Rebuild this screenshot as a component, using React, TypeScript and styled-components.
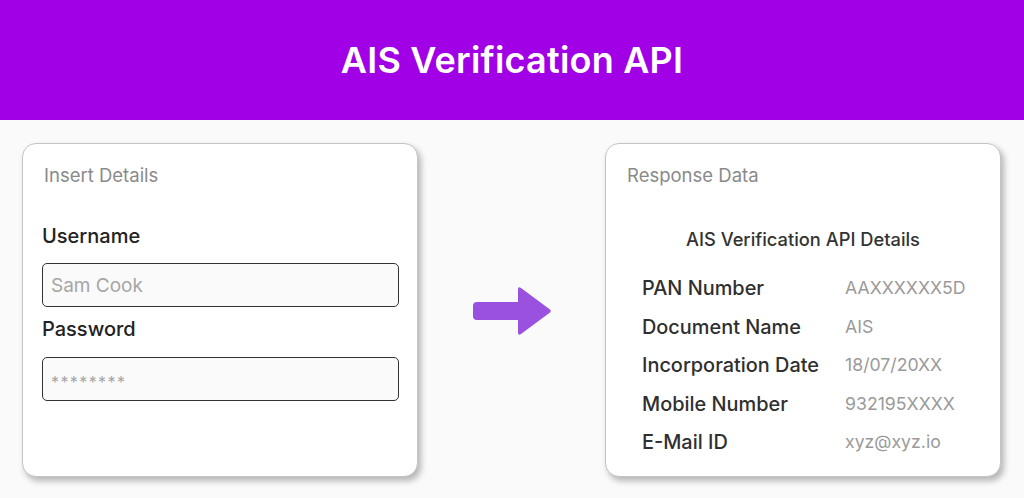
import React from "react";
import styled, { createGlobalStyle } from "styled-components";

const GlobalStyle = createGlobalStyle`
  html, body {
    margin: 0;
    padding: 0;
    background: #fafafa;
    font-family: "Inter", "Noto Sans", sans-serif;
  }
`;

const Page = styled.div`
  width: 1024px;
  height: 498px;
  display: flex;
  flex-direction: column;
  background: #fafafa;
  overflow: hidden;
`;

const Banner = styled.header`
  height: 120px;
  flex-shrink: 0;
  background: #a100e6;
  display: flex;
  align-items: center;
  justify-content: center;
`;

const BannerTitle = styled.h1`
  margin: 0;
  color: #ffffff;
  font-size: 36px;
  line-height: 44px;
  font-weight: 600;
  letter-spacing: 0.2px;
`;

const Content = styled.main`
  display: flex;
  align-items: center;
  justify-content: space-between;
  padding: 23px 23px 0 22px;
`;

const Card = styled.section`
  box-sizing: border-box;
  width: 396px;
  height: 334px;
  background: #ffffff;
  border: 1px solid #c4c4c4;
  border-radius: 14px;
  box-shadow: 3px 4px 6px rgba(0, 0, 0, 0.28);
  display: flex;
  flex-direction: column;
`;

const LeftCard = styled(Card)`
  padding: 0 18px 0 19px;
`;

const RightCard = styled(Card)`
  padding: 0 20px;
`;

const CardTitle = styled.h2<{ $indent: number }>`
  margin: 19px 0 0 ${(p) => p.$indent}px;
  font-size: 18.5px;
  line-height: 24px;
  font-weight: 400;
  color: #8a8a8a;
`;

const FieldLabel = styled.label<{ $top: number }>`
  display: block;
  margin-top: ${(p) => p.$top}px;
  font-size: 20px;
  line-height: 26px;
  font-weight: 500;
  color: #222222;
`;

const Input = styled.div<{ $top: number; $dots?: boolean }>`
  box-sizing: border-box;
  margin-top: ${(p) => p.$top}px;
  height: 44px;
  border: 1px solid #333333;
  border-radius: 5px;
  background: #fafafa;
  display: flex;
  align-items: center;
  padding: ${(p) => (p.$dots ? "5px 0 0 8px" : "0 0 0 8px")};
  color: #a6a6a6;
  font-size: ${(p) => (p.$dots ? "16px" : "19px")};
  letter-spacing: ${(p) => (p.$dots ? "1.4px" : "0")};
`;

const Arrow = styled.svg`
  width: 80px;
  height: 50px;
  margin-top: 2px;
`;

const DetailsHeading = styled.h3`
  margin: 40px 0 0;
  text-align: center;
  font-size: 18.3px;
  line-height: 24px;
  font-weight: 500;
  color: #333333;
`;

const Rows = styled.dl`
  margin: 25px 0 0 16px;
  display: grid;
  grid-template-columns: 203px auto;
  row-gap: 14.5px;
`;

const Key = styled.dt`
  margin: 0;
  font-size: 19.9px;
  line-height: 24px;
  font-weight: 500;
  color: #2f2f2f;
`;

const Value = styled.dd`
  margin: 0;
  font-size: 17.7px;
  line-height: 24px;
  font-weight: 400;
  color: #9a9a9a;
`;

const rows: [string, string][] = [
  ["PAN Number", "AAXXXXXX5D"],
  ["Document Name", "AIS"],
  ["Incorporation Date", "18/07/20XX"],
  ["Mobile Number", "932195XXXX"],
  ["E-Mail ID", "xyz@xyz.io"],
];

export default function App() {
  return (
    <Page>
      <GlobalStyle />
      <Banner>
        <BannerTitle>AIS Verification API</BannerTitle>
      </Banner>
      <Content>
        <LeftCard>
          <CardTitle $indent={2}>Insert Details</CardTitle>
          <FieldLabel $top={36}>Username</FieldLabel>
          <Input $top={14}>Sam Cook</Input>
          <FieldLabel $top={9}>Password</FieldLabel>
          <Input $top={15} $dots>
            ********
          </Input>
        </LeftCard>
        <Arrow viewBox="0 0 80 50">
          <path
            d="M5 16 H46 V3.5 Q46 0 49 2 L78 23.5 Q79.5 25 78 26.5 L49 48 Q46 50 46 46.5 V34 H5 Q1 34 1 30 V20 Q1 16 5 16 Z"
            fill="#9b51e0"
          />
        </Arrow>
        <RightCard>
          <CardTitle $indent={1}>Response Data</CardTitle>
          <DetailsHeading>AIS Verification API Details</DetailsHeading>
          <Rows>
            {rows.map(([k, v]) => (
              <React.Fragment key={k}>
                <Key>{k}</Key>
                <Value>{v}</Value>
              </React.Fragment>
            ))}
          </Rows>
        </RightCard>
      </Content>
    </Page>
  );
}
